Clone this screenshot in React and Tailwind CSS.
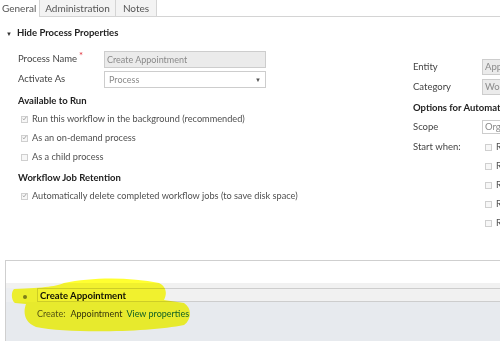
import React from 'react';

function Check({ checked }) {
  return (
    <span className="flex items-center justify-center w-[7px] h-[7px] border border-[#cfcfcf] bg-[#f7f7f7] shrink-0">
      {checked && (
        <svg width="7" height="7" viewBox="0 0 7 7" className="-mt-[1px]">
          <path d="M1 3.6 L2.8 5.4 L6 1.2" fill="none" stroke="#9a9a9a" strokeWidth="1.2" />
        </svg>
      )}
    </span>
  );
}

function CheckRow({ checked, label }) {
  return (
    <div className="flex items-center gap-[4px] h-[19px] pl-[3px] whitespace-nowrap text-[9.2px] text-[#505050]">
      <Check checked={checked} />
      <span>{label}</span>
    </div>
  );
}

function Highlight() {
  return (
    <svg
      className="absolute left-0 top-0 pointer-events-none mix-blend-multiply"
      width="500"
      height="341"
      viewBox="0 0 500 341"
    >
      <path
        d="M14 289 C11 292, 11 300, 15 303 L26 304 C23 312, 24 322, 36 327 C70 334, 150 332, 184 325 C192 319, 192 308, 184 303 L164 300 C167 294, 167 287, 159 283 C130 277, 92 277, 64 283 C58 286, 45 288, 14 289 Z"
        fill="#ffff30"
      />
    </svg>
  );
}

export default function App() {
  return (
    <div className="relative w-[500px] h-[341px] overflow-hidden bg-white text-[9.5px] text-[#444] font-['Lato','Open_Sans',sans-serif]">
      <div className="h-[260px] flex flex-col">
        {/* tabs */}
        <div className="flex h-[17px] text-[10px] text-[#555]">
          <div className="w-[40px] pl-[2px] flex items-center bg-white border-r border-[#d4d4d4]">General</div>
          <div className="w-[76px] flex items-center justify-center bg-[#f3f3f3] border-r border-b border-[#d4d4d4]">Administration</div>
          <div className="w-[41px] flex items-center justify-center bg-[#f3f3f3] border-r border-b border-[#d4d4d4]">Notes</div>
          <div className="flex-1 border-b border-[#d4d4d4]" />
        </div>

        <div className="mt-[10px] h-[12px] flex items-center pl-[6px] gap-[5px] font-bold text-[#222]">
          <span className="text-[6px] text-[#333]">▼</span>
          <span>Hide Process Properties</span>
        </div>

        <div className="flex">
          {/* left column */}
          <div className="w-[413px] shrink-0 pl-[18px] pt-[12px]">
            <div className="flex items-center h-[17px]">
              <span className="w-[86px]">
                Process Name<span className="text-[#e0303a] ml-[2px] relative -top-[3px]">*</span>
              </span>
              <div className="w-[162px] h-[17px] bg-[#ebebeb] border border-[#cdcdcd] pl-[2px] flex items-center text-[9px] text-[#8a8a8a]">
                Create Appointment
              </div>
            </div>
            <div className="flex items-center h-[17px] mt-[3px]">
              <span className="w-[86px]">Activate As</span>
              <div className="w-[162px] h-[17px] bg-white border border-[#cdcdcd] pl-[4px] pr-[4px] flex items-center justify-between text-[9px] text-[#8a8a8a]">
                <span>Process</span>
                <span className="text-[6px] text-[#555]">▼</span>
              </div>
            </div>

            <div className="mt-[7px] h-[12px] flex items-center font-bold text-[#222]">Available to Run</div>
            <div className="mt-[2.5px]">
              <CheckRow checked label="Run this workflow in the background (recommended)" />
              <CheckRow checked label="As an on-demand process" />
              <CheckRow label="As a child process" />
            </div>

            <div className="mt-[6px] h-[12px] flex items-center font-bold text-[#222]">Workflow Job Retention</div>
            <div className="mt-[2px]">
              <CheckRow checked label="Automatically delete completed workflow jobs (to save disk space)" />
            </div>
          </div>

          {/* right column */}
          <div className="flex-1 min-w-0 pt-[20px] whitespace-nowrap">
            <div className="flex items-center h-[16px]">
              <span className="w-[69px] shrink-0">Entity</span>
              <div className="w-[80px] shrink-0 h-[16px] bg-[#ebebeb] border border-[#cdcdcd] pl-[2px] flex items-center text-[#8a8a8a]">Appointment</div>
            </div>
            <div className="flex items-center h-[16px] mt-[4px]">
              <span className="w-[69px] shrink-0">Category</span>
              <div className="w-[80px] shrink-0 h-[16px] bg-[#ebebeb] border border-[#cdcdcd] pl-[2px] flex items-center text-[#8a8a8a]">Workflow</div>
            </div>
            <div className="mt-[7px] h-[12px] flex items-center font-bold text-[#222]">Options for Automatic Processes</div>
            <div className="flex items-center h-[14px] mt-[6px]">
              <span className="w-[69px] shrink-0">Scope</span>
              <div className="w-[80px] shrink-0 h-[14px] bg-white border border-[#cdcdcd] pl-[2px] flex items-center text-[#8a8a8a]">Organization</div>
            </div>
            <div className="flex mt-[3.5px]">
              <span className="w-[69px] shrink-0 h-[19px] flex items-center">Start when:</span>
              <div>
                <CheckRow label="Record is created" />
                <CheckRow label="Record status changes" />
                <CheckRow label="Record is assigned" />
                <CheckRow label="Record fields change" />
                <CheckRow label="Record is deleted" />
              </div>
            </div>
          </div>
        </div>
      </div>

      {/* designer panel */}
      <div className="ml-[5px] h-[81px] border-l border-t border-[#cfcfcf] flex flex-col">
        <div className="h-[22px] bg-white" />
        <div className="flex-1 bg-[#e7eaee] flex flex-col">
          <div className="h-[5px] bg-[#f1f1f1]" />
          <div className="flex h-[14px]">
            <div className="w-[31px] flex items-center justify-center pl-[7px] bg-[#eceef1]">
              <span className="w-[4px] h-[4px] rounded-full bg-[#7d7d7d] mt-[4px]" />
            </div>
            <div className="flex-1 bg-[#f1f1f1] border-t border-b border-l border-[#cdcdcd] flex items-center pl-[2px] pt-[3px] font-bold text-[#111]">
              Create Appointment
            </div>
          </div>
          <div className="flex items-center h-[20px] pt-[3px] pl-[31px] whitespace-nowrap text-[9px]">
            <span className="text-[#555]">Create:</span>
            <span className="text-[#333] ml-[5px]">Appointment</span>
            <span className="text-[#1160b7] ml-[4px]">View properties</span>
          </div>
        </div>
      </div>

      <Highlight />
    </div>
  );
}
